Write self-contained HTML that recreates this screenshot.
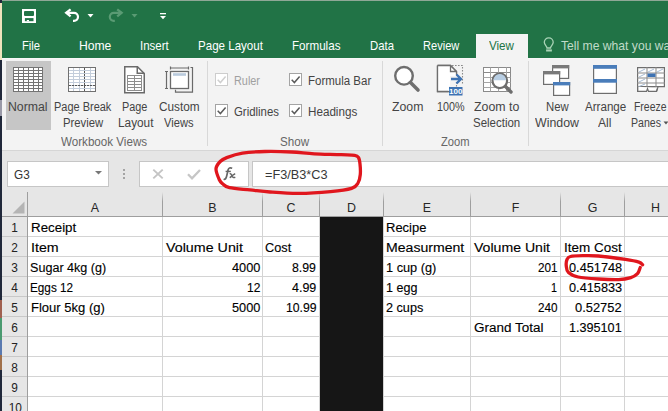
<!DOCTYPE html>
<html><head><meta charset="utf-8"><style>
html,body{margin:0;padding:0;width:668px;height:411px;overflow:hidden;background:#fff}
body{position:relative;font-family:"Liberation Sans",sans-serif}
body>div{position:absolute;box-sizing:content-box}
.t{white-space:nowrap;transform-origin:0 0}
</style></head><body>
<div style="left:0px;top:0px;width:2px;height:411px;background:#20283a;"></div>
<div style="left:0px;top:3px;width:2px;height:57px;background:#efe3bd;"></div>
<div style="left:0px;top:100px;width:2px;height:16px;background:#9a9aa8;"></div>
<div style="left:0px;top:300px;width:2px;height:18px;background:#a06050;"></div>
<div style="left:0px;top:318px;width:2px;height:22px;background:#4a9a70;"></div>
<div style="left:0px;top:340px;width:2px;height:15px;background:#5a7ab0;"></div>
<div style="left:0px;top:355px;width:2px;height:15px;background:#a0704a;"></div>
<div style="left:2px;top:0px;width:666px;height:1px;background:#8fa897;"></div>
<div style="left:2px;top:1px;width:666px;height:57px;background:#217346;"></div>
<svg style="position:absolute;left:22px;top:9px" width="14" height="14" viewBox="0 0 14 14"><rect x="0" y="0" width="14" height="14" fill="#fff"/><rect x="2" y="1.9" width="10" height="5.2" rx="1" fill="#217346"/><rect x="2.9" y="9.1" width="8.6" height="3.1" fill="#217346"/><rect x="4.8" y="11" width="2.2" height="1.3" fill="#fff"/></svg>
<svg style="position:absolute;left:64px;top:8px" width="17" height="16" viewBox="0 0 17 16"><path d="M2 4.8H10A4 4 0 0 1 10 12.8H9" fill="none" stroke="#fff" stroke-width="2.2"/><path d="M6.6 1.3L2.2 4.8L6.6 8.3" fill="none" stroke="#fff" stroke-width="2.3"/></svg>
<svg style="position:absolute;left:87px;top:13px" width="7" height="5" viewBox="0 0 7 5"><path d="M0.5 1H6.5L3.5 4.5Z" fill="#fff"/></svg>
<svg style="position:absolute;left:107px;top:8px" width="17" height="16" viewBox="0 0 17 16"><path d="M14.8 4.8H6.8A4 4 0 0 0 6.8 12.8H7.8" fill="none" stroke="#5a9b74" stroke-width="2.2"/><path d="M10.2 1.3L14.6 4.8L10.2 8.3" fill="none" stroke="#5a9b74" stroke-width="2.3"/></svg>
<svg style="position:absolute;left:131px;top:13px" width="7" height="5" viewBox="0 0 7 5"><path d="M0.5 1H6.5L3.5 4.5Z" fill="#5a9b74"/></svg>
<svg style="position:absolute;left:159px;top:12px" width="8" height="9" viewBox="0 0 8 9"><rect x="1" y="1" width="6" height="1.3" fill="#fff"/><path d="M1 4H7L4 7.2Z" fill="#fff"/></svg>
<div class="t" style="left:22.00px;top:39.71px;font-size:12.15px;line-height:12.15px;color:#fff;transform:scaleX(0.9244);">File</div>
<div class="t" style="left:78.50px;top:39.71px;font-size:12.15px;line-height:12.15px;color:#fff;transform:scaleX(0.9996);">Home</div>
<div class="t" style="left:140.20px;top:39.71px;font-size:12.15px;line-height:12.15px;color:#fff;transform:scaleX(0.9477);">Insert</div>
<div class="t" style="left:198.00px;top:39.71px;font-size:12.15px;line-height:12.15px;color:#fff;transform:scaleX(0.9526);">Page Layout</div>
<div class="t" style="left:292.30px;top:39.71px;font-size:12.15px;line-height:12.15px;color:#fff;transform:scaleX(0.9577);">Formulas</div>
<div class="t" style="left:370.00px;top:39.71px;font-size:12.15px;line-height:12.15px;color:#fff;transform:scaleX(0.9351);">Data</div>
<div class="t" style="left:423.40px;top:39.71px;font-size:12.15px;line-height:12.15px;color:#fff;transform:scaleX(0.9111);">Review</div>
<div style="left:476px;top:34px;width:52px;height:25px;background:#f3f3f3;"></div>
<div class="t" style="left:489.00px;top:39.71px;font-size:12.15px;line-height:12.15px;color:#217346;transform:scaleX(0.9572);">View</div>
<svg style="position:absolute;left:540px;top:35px" width="20" height="20" viewBox="0 0 20 20"><path d="M7 13C7 11 4.3 10 4.3 7.3A4.45 4.45 0 0 1 13.2 7.3C13.2 10 10.5 11 10.5 13Z" fill="none" stroke="#a9d3b6" stroke-width="1.3"/><rect x="6.1" y="14.4" width="5.8" height="2.1" fill="#a9d3b6"/></svg>
<div class="t" style="left:561.00px;top:39.71px;font-size:12.15px;line-height:12.15px;color:#c0dbc9;transform:scaleX(1.0000);">Tell me what you want to do</div>
<div style="left:2px;top:58px;width:666px;height:92px;background:#f3f3f3;"></div>
<div style="left:2px;top:58px;width:474px;height:1px;background:#f7f7f7;"></div>
<div style="left:528px;top:58px;width:140px;height:1px;background:#f7f7f7;"></div>
<div style="left:2px;top:150px;width:666px;height:1px;background:#d6d6d6;"></div>
<div style="left:207px;top:61px;width:1px;height:85px;background:#d8d8d8;"></div>
<div style="left:382px;top:61px;width:1px;height:85px;background:#d8d8d8;"></div>
<div style="left:528px;top:61px;width:1px;height:85px;background:#d8d8d8;"></div>
<div style="left:6px;top:61px;width:45px;height:69px;background:#c6c6c6;"></div>
<div class="t" style="left:8.20px;top:100.83px;font-size:12.01px;line-height:12.01px;color:#444444;transform:scaleX(1.0230);">Normal</div>
<div class="t" style="left:53.60px;top:101.03px;font-size:12.01px;line-height:12.01px;color:#444444;transform:scaleX(0.9145);">Page Break</div>
<div class="t" style="left:62.50px;top:117.03px;font-size:12.01px;line-height:12.01px;color:#444444;transform:scaleX(0.9410);">Preview</div>
<div class="t" style="left:122.30px;top:101.03px;font-size:12.01px;line-height:12.01px;color:#444444;transform:scaleX(0.9054);">Page</div>
<div class="t" style="left:117.50px;top:117.03px;font-size:12.01px;line-height:12.01px;color:#444444;transform:scaleX(0.9844);">Layout</div>
<div class="t" style="left:159.00px;top:101.03px;font-size:12.01px;line-height:12.01px;color:#444444;transform:scaleX(0.9835);">Custom</div>
<div class="t" style="left:164.20px;top:117.03px;font-size:12.01px;line-height:12.01px;color:#444444;transform:scaleX(0.9270);">Views</div>
<div class="t" style="left:60.80px;top:135.83px;font-size:12.01px;line-height:12.01px;color:#666;transform:scaleX(0.9684);">Workbook Views</div>
<svg style="position:absolute;left:215px;top:73px" width="13" height="13" viewBox="0 0 13 13"><rect x="0.5" y="0.5" width="12" height="12" fill="#fff" stroke="#cdcdcd"/><path d="M2.7 6.8L5.4 9.6L10.6 3.6" fill="none" stroke="#cfcfcf" stroke-width="1.5"/></svg>
<svg style="position:absolute;left:289px;top:73px" width="13" height="13" viewBox="0 0 13 13"><rect x="0.5" y="0.5" width="12" height="12" fill="#fff" stroke="#a4a4a4"/><path d="M2.7 6.8L5.4 9.6L10.6 3.6" fill="none" stroke="#5a5a5a" stroke-width="1.5"/></svg>
<svg style="position:absolute;left:215px;top:104px" width="13" height="13" viewBox="0 0 13 13"><rect x="0.5" y="0.5" width="12" height="12" fill="#fff" stroke="#a4a4a4"/><path d="M2.7 6.8L5.4 9.6L10.6 3.6" fill="none" stroke="#5a5a5a" stroke-width="1.5"/></svg>
<svg style="position:absolute;left:289px;top:104px" width="13" height="13" viewBox="0 0 13 13"><rect x="0.5" y="0.5" width="12" height="12" fill="#fff" stroke="#a4a4a4"/><path d="M2.7 6.8L5.4 9.6L10.6 3.6" fill="none" stroke="#5a5a5a" stroke-width="1.5"/></svg>
<div class="t" style="left:233.70px;top:75.23px;font-size:12.01px;line-height:12.01px;color:#a0a0a0;transform:scaleX(0.9058);">Ruler</div>
<div class="t" style="left:307.50px;top:75.23px;font-size:12.01px;line-height:12.01px;color:#444444;transform:scaleX(0.9579);">Formula Bar</div>
<div class="t" style="left:233.70px;top:105.83px;font-size:12.01px;line-height:12.01px;color:#444444;transform:scaleX(0.9495);">Gridlines</div>
<div class="t" style="left:307.50px;top:105.83px;font-size:12.01px;line-height:12.01px;color:#444444;transform:scaleX(0.9714);">Headings</div>
<div class="t" style="left:280.20px;top:135.83px;font-size:12.01px;line-height:12.01px;color:#666;transform:scaleX(0.9685);">Show</div>
<div class="t" style="left:392.00px;top:101.03px;font-size:12.01px;line-height:12.01px;color:#444444;transform:scaleX(1.0227);">Zoom</div>
<div class="t" style="left:436.70px;top:101.03px;font-size:12.01px;line-height:12.01px;color:#444444;transform:scaleX(0.8984);">100%</div>
<div class="t" style="left:474.00px;top:101.03px;font-size:12.01px;line-height:12.01px;color:#444444;transform:scaleX(1.0282);">Zoom to</div>
<div class="t" style="left:473.30px;top:117.03px;font-size:12.01px;line-height:12.01px;color:#444444;transform:scaleX(0.9572);">Selection</div>
<div class="t" style="left:440.80px;top:135.83px;font-size:12.01px;line-height:12.01px;color:#666;transform:scaleX(0.9315);">Zoom</div>
<div class="t" style="left:546.10px;top:101.03px;font-size:12.01px;line-height:12.01px;color:#444444;transform:scaleX(0.9447);">New</div>
<div class="t" style="left:535.20px;top:117.03px;font-size:12.01px;line-height:12.01px;color:#444444;transform:scaleX(1.0300);">Window</div>
<div class="t" style="left:584.80px;top:101.03px;font-size:12.01px;line-height:12.01px;color:#444444;transform:scaleX(0.9665);">Arrange</div>
<div class="t" style="left:598.00px;top:117.03px;font-size:12.01px;line-height:12.01px;color:#444444;transform:scaleX(1.0113);">All</div>
<div class="t" style="left:634.30px;top:101.03px;font-size:12.01px;line-height:12.01px;color:#444444;transform:scaleX(0.8694);">Freeze</div>
<div class="t" style="left:631.20px;top:117.03px;font-size:12.01px;line-height:12.01px;color:#444444;transform:scaleX(0.8808);">Panes</div>
<svg style="position:absolute;left:663px;top:121px" width="6" height="4" viewBox="0 0 6 4"><path d="M0.5 0.5H5.5L3 3.5Z" fill="#555"/></svg>
<svg style="position:absolute;left:13px;top:67px" width="30" height="25" viewBox="0 0 30 25"><rect x="0.5" y="0.5" width="29" height="24" fill="#fff" stroke="#747474"/><rect x="5" y="0" width="1" height="25" fill="#747474"/><rect x="10" y="0" width="1" height="25" fill="#747474"/><rect x="15" y="0" width="1" height="25" fill="#747474"/><rect x="20" y="0" width="1" height="25" fill="#747474"/><rect x="25" y="0" width="1" height="25" fill="#747474"/><rect x="0" y="3" width="30" height="1" fill="#747474"/><rect x="0" y="6" width="30" height="1" fill="#747474"/><rect x="0" y="9" width="30" height="1" fill="#747474"/><rect x="0" y="12" width="30" height="1" fill="#747474"/><rect x="0" y="15" width="30" height="1" fill="#747474"/><rect x="0" y="18" width="30" height="1" fill="#747474"/><rect x="0" y="21" width="30" height="1" fill="#747474"/></svg>
<svg style="position:absolute;left:68px;top:67px" width="28" height="25" viewBox="0 0 28 25"><rect x="0.5" y="0.5" width="27" height="24" fill="#fff" stroke="#707070"/><rect x="5" y="1" width="1" height="23" fill="#c3cddb"/><rect x="11" y="1" width="1" height="23" fill="#c3cddb"/><rect x="22" y="1" width="1" height="23" fill="#c3cddb"/><rect x="1" y="3" width="26" height="1" fill="#c3cddb"/><rect x="1" y="6" width="26" height="1" fill="#c3cddb"/><rect x="1" y="9" width="26" height="1" fill="#c3cddb"/><rect x="1" y="12" width="26" height="1" fill="#c3cddb"/><rect x="1" y="15" width="26" height="1" fill="#c3cddb"/><rect x="1" y="18" width="26" height="1" fill="#c3cddb"/><rect x="1" y="21" width="26" height="1" fill="#c3cddb"/><path d="M16.5 1V24" stroke="#555" stroke-dasharray="2 1"/><path d="M1 18.5H27" stroke="#555" stroke-dasharray="2 1"/></svg>
<svg style="position:absolute;left:124px;top:66px" width="21" height="28" viewBox="0 0 21 28"><path d="M0.75 0.75H13.5L20.25 7.5V26.75H0.75Z" fill="#fff" stroke="#6a6a6a" stroke-width="1.5"/><path d="M13.25 0.75V7.25H20.25" fill="none" stroke="#6a6a6a" stroke-width="1.5"/><rect x="3" y="9" width="15" height="1" fill="#8e8e8e"/><rect x="3" y="12" width="15" height="1" fill="#8e8e8e"/><rect x="3" y="15" width="15" height="1" fill="#8e8e8e"/><rect x="3" y="18" width="15" height="1" fill="#8e8e8e"/><rect x="3" y="21" width="15" height="1" fill="#8e8e8e"/><rect x="3" y="24" width="15" height="1" fill="#8e8e8e"/><rect x="3" y="9" width="1" height="16" fill="#8e8e8e"/><rect x="10" y="9" width="1" height="16" fill="#8e8e8e"/><rect x="17" y="9" width="1" height="16" fill="#8e8e8e"/></svg>
<svg style="position:absolute;left:164px;top:66px" width="30" height="28" viewBox="0 0 30 28"><rect x="6.5" y="5.5" width="18" height="17" fill="#fff" stroke="#6a6a6a" stroke-width="1.3"/><rect x="9" y="7.2" width="13" height="2.6" fill="#b9cadc"/><path d="M6.5 2H24.5M6.5 0.5V3.5M24.5 0.5V3.5" stroke="#6a6a6a" stroke-width="1.2"/><path d="M2.5 5.5V22.5M1 5.5H4M1 22.5H4" stroke="#6a6a6a" stroke-width="1.2"/><path d="M26.5 1.5H28.5V26.2H11.5V23.8" fill="none" stroke="#6a6a6a" stroke-width="1.2"/></svg>
<svg style="position:absolute;left:393px;top:65px" width="28" height="28" viewBox="0 0 28 28"><circle cx="11" cy="10.8" r="8.8" fill="#fff" stroke="#6e6e6e" stroke-width="2.4"/><path d="M17.5 17.5L25 25" stroke="#6e6e6e" stroke-width="3.6" stroke-linecap="round"/></svg>
<svg style="position:absolute;left:436px;top:64px" width="28" height="33" viewBox="0 0 28 33"><path d="M1.5 1.5H14.5L20.5 7.5V10" fill="none" stroke="#6e6e6e" stroke-width="1.3"/><path d="M1.5 1.5V27.5H13" fill="none" stroke="#6e6e6e" stroke-width="1.3"/><path d="M14.5 1.5V7.5H20.5" fill="none" stroke="#6e6e6e" stroke-width="1.3"/><path d="M1.5 1.5H13V27H1.5Z" fill="#fff"/><path d="M2 2H14L20 8V12H14V22H2Z" fill="#fff"/><path d="M1.5 1.5H14.5L20.5 7.5V11M1.5 1.5V27.5H12.5M14.5 1.5V7.5H20.5" fill="none" stroke="#6e6e6e" stroke-width="1.3"/><path d="M16 1.5H26.5V21" fill="none" stroke="#8a8a8a" stroke-width="1.1" stroke-dasharray="1.6 1.4"/><path d="M20.5 18V23" stroke="#8a8a8a" stroke-width="1.1" stroke-dasharray="1.6 1.4"/><path d="M15 15H25M20.5 10.5L25 15L20.5 19.5" fill="none" stroke="#3e73b3" stroke-width="2.4"/><rect x="13" y="23" width="13.5" height="8.5" fill="#3e73b3"/><text x="19.75" y="30.3" font-family="Liberation Sans" font-size="8" font-weight="bold" fill="#fff" text-anchor="middle">100</text></svg>
<svg style="position:absolute;left:483px;top:67px" width="30" height="28" viewBox="0 0 30 28"><rect x="0.5" y="0.5" width="27" height="24" fill="#fff" stroke="#8a8a8a"/><rect x="0.5" y="5" width="27" height="1" fill="#8a8a8a"/><rect x="7" y="0.5" width="1" height="24" fill="#a6a6a6"/><rect x="15" y="0.5" width="1" height="24" fill="#a6a6a6"/><rect x="23" y="0.5" width="1" height="24" fill="#a6a6a6"/><rect x="0.5" y="10" width="27" height="1" fill="#a6a6a6"/><rect x="0.5" y="15" width="27" height="1" fill="#a6a6a6"/><rect x="0.5" y="20" width="27" height="1" fill="#a6a6a6"/><circle cx="16.8" cy="13.8" r="7.3" fill="#fff" stroke="#6e6e6e" stroke-width="2.2"/><path d="M10.6 13.2A6.2 6.2 0 0 1 23 13.2Z" fill="#b8cee4"/><path d="M22.5 19.5L28 25" stroke="#6e6e6e" stroke-width="3.4" stroke-linecap="round"/></svg>
<svg style="position:absolute;left:542px;top:64px" width="30" height="33" viewBox="0 0 30 33"><rect x="10.6" y="1.6" width="16" height="12.8" fill="#fff" stroke="#6e6e6e" stroke-width="1.2"/><rect x="10" y="1" width="17.2" height="3.4" fill="#7a7a7a"/><rect x="1.6" y="7.6" width="16" height="12.8" fill="#fff" stroke="#6e6e6e" stroke-width="1.2"/><rect x="1" y="7" width="17.2" height="3.4" fill="#7a7a7a"/><rect x="11.6" y="18.6" width="16" height="12.8" fill="#fff" stroke="#6e6e6e" stroke-width="1.2"/><rect x="11" y="18" width="17.2" height="3.4" fill="#4a7dba"/></svg>
<svg style="position:absolute;left:593px;top:65px" width="24" height="29" viewBox="0 0 24 29"><rect x="0.6" y="0.6" width="22.8" height="27.8" fill="#fff" stroke="#6e6e6e" stroke-width="1.2"/><rect x="0" y="0" width="24" height="3.8" fill="#4a7dba"/><rect x="0" y="14" width="24" height="3.7" fill="#4a7dba"/></svg>
<svg style="position:absolute;left:637px;top:67px" width="28" height="26" viewBox="0 0 28 26"><path d="M0.6 0.6H27.4V19.6H0.6Z" fill="#fff" stroke="#6e6e6e" stroke-width="1.2"/><path d="M0.6 19.6V24.4H9.5L10.5 21.5H10.5L11.5 24.4H19.5L20.5 21.5" fill="#fff" stroke="#6e6e6e" stroke-width="1.2"/><path d="M0.6 19.6V24.5H9M12 24.5H19.5L21 20" fill="none" stroke="#6e6e6e" stroke-width="1.2"/><rect x="9.5" y="0" width="1" height="20" fill="#8a8a8a"/><rect x="18.5" y="0" width="1" height="20" fill="#8a8a8a"/><rect x="0" y="5.5" width="28" height="1" fill="#8a8a8a"/><rect x="0" y="10.5" width="28" height="1" fill="#8a8a8a"/><rect x="0" y="15.5" width="28" height="1" fill="#8a8a8a"/><rect x="10.5" y="6.5" width="8" height="3.5" fill="#3e73b3"/><path d="M2 5L8 2M11 5L17 2M20 5L26 2M2 10L8 7M2 15L8 12M2 19.5L8 17" stroke="#8faac8" stroke-width="0.8"/></svg>
<div style="left:2px;top:151px;width:666px;height:65px;background:#e6e6e6;"></div>
<div style="left:7px;top:161px;width:100px;height:24px;border:1px solid #c6c6c6;background:#fff"></div>
<div class="t" style="left:14.20px;top:169.01px;font-size:12.15px;line-height:12.15px;color:#333;transform:scaleX(0.9686);">G3</div>
<svg style="position:absolute;left:94px;top:170px" width="9" height="6" viewBox="0 0 9 6"><path d="M1 1H8L4.5 4.5Z" fill="#777"/></svg>
<div style="left:123px;top:169px;width:2px;height:2px;background:#a4a4a4;"></div>
<div style="left:123px;top:173px;width:2px;height:2px;background:#a4a4a4;"></div>
<div style="left:123px;top:177px;width:2px;height:2px;background:#a4a4a4;"></div>
<div style="left:139px;top:161px;width:108px;height:24px;border:1px solid #c6c6c6;background:#fff"></div>
<div style="left:252px;top:161px;width:418px;height:24px;border:1px solid #c6c6c6;background:#fff"></div>
<svg style="position:absolute;left:151px;top:168px" width="14" height="12" viewBox="0 0 14 12"><path d="M2.3 1.6L11.7 10.4M11.7 1.6L2.3 10.4" stroke="#c4c4c4" stroke-width="1.9"/></svg>
<svg style="position:absolute;left:186px;top:168px" width="16" height="12" viewBox="0 0 16 12"><path d="M2 6.3L6 10.3L14 2" fill="none" stroke="#c6c6c6" stroke-width="2.3"/></svg>
<svg style="position:absolute;left:218px;top:162px" width="24" height="24" viewBox="0 0 24 24"><path d="M5.6 17.3C7.3 17.8 8.2 16.3 8.8 13.5L10.2 7.6C10.8 5.9 12 5.5 14.2 6.3" fill="none" stroke="#666" stroke-width="1.7"/><path d="M7.6 9.4H12.8" stroke="#666" stroke-width="1.4"/><path d="M11.6 11.6C12.8 11.4 13.4 12.2 14 13.8C14.5 15.3 15.5 15.9 17.3 15.2M17.2 11.7C15.5 12.2 13.5 14.2 11.8 15.8" fill="none" stroke="#666" stroke-width="1.5"/></svg>
<div class="t" style="left:264.70px;top:169.01px;font-size:12.15px;line-height:12.15px;color:#383838;transform:scaleX(1.0456);">=F3/B3*C3</div>
<div style="left:162px;top:192px;width:1px;height:24px;background:linear-gradient(#e6e6e6,#9e9e9e 40%,#9e9e9e)"></div>
<div style="left:262px;top:192px;width:1px;height:24px;background:linear-gradient(#e6e6e6,#9e9e9e 40%,#9e9e9e)"></div>
<div style="left:319px;top:192px;width:1px;height:24px;background:linear-gradient(#e6e6e6,#9e9e9e 40%,#9e9e9e)"></div>
<div style="left:383px;top:192px;width:1px;height:24px;background:linear-gradient(#e6e6e6,#9e9e9e 40%,#9e9e9e)"></div>
<div style="left:470px;top:192px;width:1px;height:24px;background:linear-gradient(#e6e6e6,#9e9e9e 40%,#9e9e9e)"></div>
<div style="left:560px;top:192px;width:1px;height:24px;background:linear-gradient(#e6e6e6,#9e9e9e 40%,#9e9e9e)"></div>
<div style="left:624px;top:192px;width:1px;height:24px;background:linear-gradient(#e6e6e6,#9e9e9e 40%,#9e9e9e)"></div>
<div style="left:2px;top:216px;width:666px;height:1px;background:#9e9e9e;"></div>
<div class="t" style="left:90.85px;top:201.68px;font-size:12.43px;line-height:12.43px;color:#262626;transform:scaleX(1.0000);">A</div>
<div class="t" style="left:208.35px;top:201.68px;font-size:12.43px;line-height:12.43px;color:#262626;transform:scaleX(1.0000);">B</div>
<div class="t" style="left:286.51px;top:201.68px;font-size:12.43px;line-height:12.43px;color:#262626;transform:scaleX(1.0000);">C</div>
<div class="t" style="left:347.01px;top:201.68px;font-size:12.43px;line-height:12.43px;color:#262626;transform:scaleX(1.0000);">D</div>
<div class="t" style="left:422.85px;top:201.68px;font-size:12.43px;line-height:12.43px;color:#262626;transform:scaleX(1.0000);">E</div>
<div class="t" style="left:511.70px;top:201.68px;font-size:12.43px;line-height:12.43px;color:#262626;transform:scaleX(1.0000);">F</div>
<div class="t" style="left:587.67px;top:201.68px;font-size:12.43px;line-height:12.43px;color:#262626;transform:scaleX(1.0000);">G</div>
<div class="t" style="left:651.01px;top:201.68px;font-size:12.43px;line-height:12.43px;color:#262626;transform:scaleX(1.0000);">H</div>
<div style="left:2px;top:217px;width:25px;height:194px;background:#e6e6e6;"></div>
<div style="left:27px;top:192px;width:1px;height:219px;background:#9e9e9e;"></div>
<svg style="position:absolute;left:12px;top:201px" width="13" height="13" viewBox="0 0 13 13"><path d="M12.5 0.5V12.5H0.5Z" fill="#b4b4b4"/></svg>
<div style="left:28px;top:217px;width:640px;height:194px;background:#fff;"></div>
<div style="left:2px;top:236px;width:25px;height:1px;background:#c8c8c8;"></div>
<div style="left:28px;top:236px;width:640px;height:1px;background:#d4d4d4;"></div>
<div style="left:2px;top:256px;width:25px;height:1px;background:#c8c8c8;"></div>
<div style="left:28px;top:256px;width:640px;height:1px;background:#d4d4d4;"></div>
<div style="left:2px;top:276px;width:25px;height:1px;background:#c8c8c8;"></div>
<div style="left:28px;top:276px;width:640px;height:1px;background:#d4d4d4;"></div>
<div style="left:2px;top:296px;width:25px;height:1px;background:#c8c8c8;"></div>
<div style="left:28px;top:296px;width:640px;height:1px;background:#d4d4d4;"></div>
<div style="left:2px;top:316px;width:25px;height:1px;background:#c8c8c8;"></div>
<div style="left:28px;top:316px;width:640px;height:1px;background:#d4d4d4;"></div>
<div style="left:2px;top:336px;width:25px;height:1px;background:#c8c8c8;"></div>
<div style="left:28px;top:336px;width:640px;height:1px;background:#d4d4d4;"></div>
<div style="left:2px;top:356px;width:25px;height:1px;background:#c8c8c8;"></div>
<div style="left:28px;top:356px;width:640px;height:1px;background:#d4d4d4;"></div>
<div style="left:2px;top:376px;width:25px;height:1px;background:#c8c8c8;"></div>
<div style="left:28px;top:376px;width:640px;height:1px;background:#d4d4d4;"></div>
<div style="left:2px;top:396px;width:25px;height:1px;background:#c8c8c8;"></div>
<div style="left:28px;top:396px;width:640px;height:1px;background:#d4d4d4;"></div>
<div style="left:162px;top:217px;width:1px;height:194px;background:#d4d4d4;"></div>
<div style="left:262px;top:217px;width:1px;height:194px;background:#d4d4d4;"></div>
<div style="left:319px;top:217px;width:1px;height:194px;background:#d4d4d4;"></div>
<div style="left:383px;top:217px;width:1px;height:194px;background:#d4d4d4;"></div>
<div style="left:470px;top:217px;width:1px;height:194px;background:#d4d4d4;"></div>
<div style="left:560px;top:217px;width:1px;height:194px;background:#d4d4d4;"></div>
<div style="left:624px;top:217px;width:1px;height:194px;background:#d4d4d4;"></div>
<div style="left:320px;top:217px;width:63px;height:194px;background:#161616;"></div>
<div class="t" style="left:11.20px;top:222.95px;font-size:11.87px;line-height:11.87px;color:#222;transform:scaleX(1.0000);">1</div>
<div class="t" style="left:11.20px;top:242.95px;font-size:11.87px;line-height:11.87px;color:#222;transform:scaleX(1.0000);">2</div>
<div class="t" style="left:11.20px;top:262.95px;font-size:11.87px;line-height:11.87px;color:#222;transform:scaleX(1.0000);">3</div>
<div class="t" style="left:11.20px;top:282.95px;font-size:11.87px;line-height:11.87px;color:#222;transform:scaleX(1.0000);">4</div>
<div class="t" style="left:11.20px;top:302.95px;font-size:11.87px;line-height:11.87px;color:#222;transform:scaleX(1.0000);">5</div>
<div class="t" style="left:11.20px;top:322.95px;font-size:11.87px;line-height:11.87px;color:#222;transform:scaleX(1.0000);">6</div>
<div class="t" style="left:11.20px;top:342.95px;font-size:11.87px;line-height:11.87px;color:#222;transform:scaleX(1.0000);">7</div>
<div class="t" style="left:11.20px;top:362.95px;font-size:11.87px;line-height:11.87px;color:#222;transform:scaleX(1.0000);">8</div>
<div class="t" style="left:11.20px;top:382.95px;font-size:11.87px;line-height:11.87px;color:#222;transform:scaleX(1.0000);">9</div>
<div class="t" style="left:8.70px;top:402.95px;font-size:11.87px;line-height:11.87px;color:#222;transform:scaleX(1.0000);">10</div>
<div class="t" style="left:30.90px;top:222.95px;font-size:11.87px;line-height:11.87px;color:#000;transform:scaleX(1.1254);-webkit-text-stroke:0.12px #000;">Receipt</div>
<div class="t" style="left:30.70px;top:242.95px;font-size:11.87px;line-height:11.87px;color:#000;transform:scaleX(1.1997);-webkit-text-stroke:0.12px #000;">Item</div>
<div class="t" style="left:30.40px;top:262.95px;font-size:11.87px;line-height:11.87px;color:#000;transform:scaleX(1.0608);-webkit-text-stroke:0.12px #000;">Sugar 4kg (g)</div>
<div class="t" style="left:30.40px;top:282.95px;font-size:11.87px;line-height:11.87px;color:#000;transform:scaleX(0.9894);-webkit-text-stroke:0.12px #000;">Eggs 12</div>
<div class="t" style="left:31.10px;top:302.95px;font-size:11.87px;line-height:11.87px;color:#000;transform:scaleX(1.0996);-webkit-text-stroke:0.12px #000;">Flour 5kg (g)</div>
<div class="t" style="left:165.70px;top:242.95px;font-size:11.87px;line-height:11.87px;color:#000;transform:scaleX(1.2045);-webkit-text-stroke:0.12px #000;">Volume Unit</div>
<div class="t" style="left:231.60px;top:262.95px;font-size:11.87px;line-height:11.87px;color:#000;transform:scaleX(1.0753);-webkit-text-stroke:0.12px #000;">4000</div>
<div class="t" style="left:246.60px;top:282.95px;font-size:11.87px;line-height:11.87px;color:#000;transform:scaleX(1.0148);-webkit-text-stroke:0.12px #000;">12</div>
<div class="t" style="left:231.60px;top:302.95px;font-size:11.87px;line-height:11.87px;color:#000;transform:scaleX(1.0753);-webkit-text-stroke:0.12px #000;">5000</div>
<div class="t" style="left:264.90px;top:242.95px;font-size:11.87px;line-height:11.87px;color:#000;transform:scaleX(1.0733);-webkit-text-stroke:0.12px #000;">Cost</div>
<div class="t" style="left:292.20px;top:262.95px;font-size:11.87px;line-height:11.87px;color:#000;transform:scaleX(1.0387);-webkit-text-stroke:0.12px #000;">8.99</div>
<div class="t" style="left:291.90px;top:282.95px;font-size:11.87px;line-height:11.87px;color:#000;transform:scaleX(1.0517);-webkit-text-stroke:0.12px #000;">4.99</div>
<div class="t" style="left:285.60px;top:302.95px;font-size:11.87px;line-height:11.87px;color:#000;transform:scaleX(1.0300);-webkit-text-stroke:0.12px #000;">10.99</div>
<div class="t" style="left:386.40px;top:222.95px;font-size:11.87px;line-height:11.87px;color:#000;transform:scaleX(1.0959);-webkit-text-stroke:0.12px #000;">Recipe</div>
<div class="t" style="left:386.40px;top:242.95px;font-size:11.87px;line-height:11.87px;color:#000;transform:scaleX(1.1867);-webkit-text-stroke:0.12px #000;">Measurment</div>
<div class="t" style="left:386.40px;top:262.95px;font-size:11.87px;line-height:11.87px;color:#000;transform:scaleX(1.0758);-webkit-text-stroke:0.12px #000;">1 cup (g)</div>
<div class="t" style="left:386.40px;top:282.95px;font-size:11.87px;line-height:11.87px;color:#000;transform:scaleX(1.0569);-webkit-text-stroke:0.12px #000;">1 egg</div>
<div class="t" style="left:386.40px;top:302.95px;font-size:11.87px;line-height:11.87px;color:#000;transform:scaleX(1.0664);-webkit-text-stroke:0.12px #000;">2 cups</div>
<div class="t" style="left:474.00px;top:242.95px;font-size:11.87px;line-height:11.87px;color:#000;transform:scaleX(1.1873);-webkit-text-stroke:0.12px #000;">Volume Unit</div>
<div class="t" style="left:537.80px;top:262.95px;font-size:11.87px;line-height:11.87px;color:#000;transform:scaleX(0.9895);-webkit-text-stroke:0.12px #000;">201</div>
<div class="t" style="left:551.40px;top:282.95px;font-size:11.87px;line-height:11.87px;color:#000;transform:scaleX(0.9087);-webkit-text-stroke:0.12px #000;">1</div>
<div class="t" style="left:537.80px;top:302.95px;font-size:11.87px;line-height:11.87px;color:#000;transform:scaleX(0.9895);-webkit-text-stroke:0.12px #000;">240</div>
<div class="t" style="left:473.60px;top:322.95px;font-size:11.87px;line-height:11.87px;color:#000;transform:scaleX(1.1364);-webkit-text-stroke:0.12px #000;">Grand Total</div>
<div class="t" style="left:563.80px;top:242.95px;font-size:11.87px;line-height:11.87px;color:#000;transform:scaleX(1.1359);-webkit-text-stroke:0.12px #000;">Item Cost</div>
<div class="t" style="left:568.90px;top:262.95px;font-size:11.87px;line-height:11.87px;color:#000;transform:scaleX(1.0744);-webkit-text-stroke:0.12px #000;">0.451748</div>
<div class="t" style="left:568.90px;top:282.95px;font-size:11.87px;line-height:11.87px;color:#000;transform:scaleX(1.0744);-webkit-text-stroke:0.12px #000;">0.415833</div>
<div class="t" style="left:575.40px;top:302.95px;font-size:11.87px;line-height:11.87px;color:#000;transform:scaleX(1.0882);-webkit-text-stroke:0.12px #000;">0.52752</div>
<div class="t" style="left:569.40px;top:322.95px;font-size:11.87px;line-height:11.87px;color:#000;transform:scaleX(1.0643);-webkit-text-stroke:0.12px #000;">1.395101</div>
<svg style="position:absolute;left:0px;top:0px" width="668" height="411" viewBox="0 0 668 411"><path d="M216.0 168.8C215.8 171.8 218.1 177.0 219.2 179.5C220.3 182.0 221.0 182.4 222.7 183.8C224.4 185.2 224.9 186.7 229.5 187.7C234.1 188.7 243.2 189.2 250.0 189.9C256.8 190.6 261.8 191.4 270.0 192.0C278.2 192.6 288.9 193.5 299.0 193.4C309.1 193.3 321.8 192.4 330.6 191.6C339.4 190.8 347.0 189.8 351.6 188.4C356.2 187.0 356.6 185.3 358.0 183.0C359.4 180.7 360.0 177.7 360.3 174.5C360.6 171.3 360.3 166.8 360.0 164.0C359.7 161.2 359.4 158.9 358.5 157.5C357.6 156.1 357.6 155.9 354.7 155.4C351.8 154.9 348.0 155.0 341.3 154.7C334.6 154.4 322.5 154.2 314.3 153.8C306.1 153.4 300.1 152.4 291.9 152.0C283.7 151.6 273.1 151.3 264.9 151.5C256.7 151.7 248.9 152.1 242.5 153.1C236.1 154.1 230.4 156.2 226.7 157.6C223.0 159.0 222.0 159.6 220.2 161.5C218.4 163.4 216.2 165.8 216.0 168.8Z" fill="none" stroke="#e0161d" stroke-width="3.3" stroke-linecap="round"/><path d="M642.6 264.8C642.0 264.4 641.8 263.0 638.9 262.1C636.0 261.2 632.1 260.4 625.4 259.4C618.6 258.4 605.5 256.6 598.4 256.0C591.3 255.4 587.6 255.6 583.0 255.7C578.4 255.8 573.2 255.9 570.5 256.5C567.8 257.1 567.7 257.9 567.0 259.5C566.3 261.1 566.0 264.0 566.3 266.2C566.5 268.4 566.5 270.7 568.5 272.5C570.5 274.3 573.2 275.9 578.2 277.0C583.2 278.1 591.7 278.6 598.4 279.0C605.1 279.4 613.2 279.8 618.6 279.6C624.0 279.4 627.6 278.6 630.8 277.6C633.9 276.6 635.9 275.3 637.5 273.6C639.1 271.9 639.8 268.5 640.2 267.5" fill="none" stroke="#e0161d" stroke-width="3.3" stroke-linecap="round"/></svg>
</body></html>
